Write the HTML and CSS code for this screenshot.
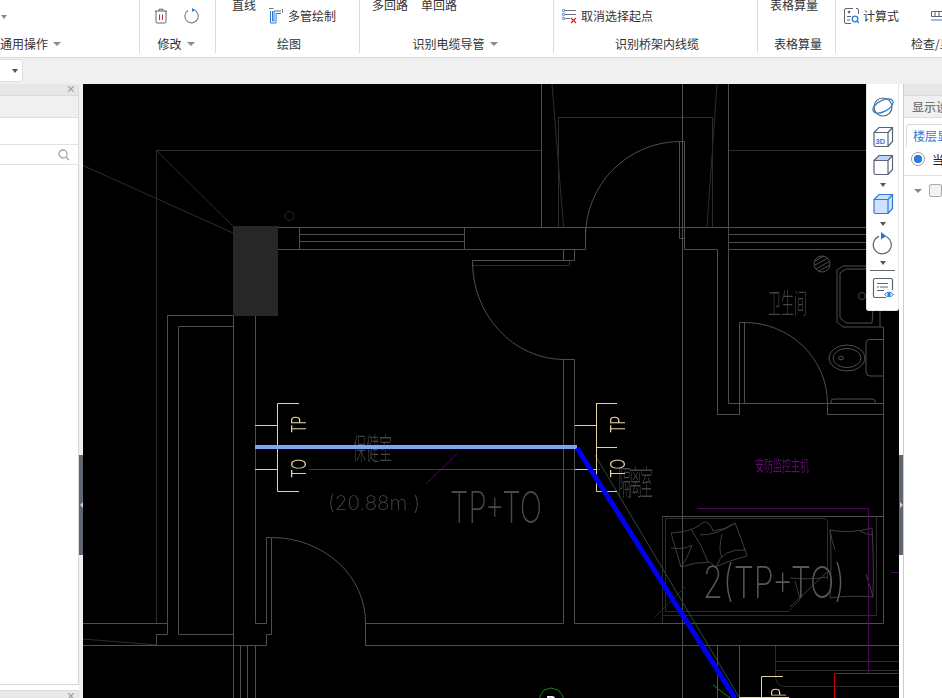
FILE: index.html
```html
<!DOCTYPE html>
<html lang="zh-CN">
<head>
<meta charset="utf-8">
<title>CAD</title>
<link rel="stylesheet" href="styles.css">
</head>
<body>
<div class="app">
  <header class="ribbon">
    <section class="group g1">
      <div class="tools"><span class="caret stray"></span></div>
      <div class="label label-left">通用操作<span class="caret"></span></div>
    </section>
    <section class="group g2">
      <div class="tools">
        <svg class="ico trash" viewBox="0 0 14 16" width="14" height="16"><path d="M1 3h12M5 3V1.200h4V3M2 3v10.800q0 1.200 1.200 1.200h7.600q1.200 0 1.200-1.200V3" fill="none" stroke="#5b6474"/><path d="M5.500 6.500v5.500M8.500 6.500v5.500" stroke="#e02020"/></svg>
        <svg class="ico redo" viewBox="0 0 16 16" width="16" height="16"><path d="M9.500 1.800A6.700 6.700 0 1 1 4 2.500" fill="none" stroke="#7a808a" stroke-width="1.100"/><path d="M8 0l3 2-3 2z" fill="#2e7bd6"/></svg>
      </div>
      <div class="label label-caret">修改<span class="caret"></span></div>
    </section>
    <section class="group g3">
      <div class="tools">
        <span class="cut">直线</span>
        <span class="tool multi">
          <svg class="ico" viewBox="0 0 15 16" width="15" height="16"><path d="M0 .5h4.500M13.500 1v4" stroke="#777" fill="none"/><path d="M1.500 3V15H7V5.500H12M3.500 3V13H5V3H12" stroke="#2e7bd6" fill="none"/></svg>
          多管绘制
        </span>
      </div>
      <div class="label">绘图</div>
    </section>
    <section class="group g4">
      <div class="tools"><span class="cut">多回路</span><span class="cut">单回路</span></div>
      <div class="label label-caret">识别电缆导管<span class="caret"></span></div>
    </section>
    <section class="group g5">
      <div class="tools">
        <span class="tool cancel">
          <svg class="ico" viewBox="0 0 15 15" width="15" height="15"><g fill="none" stroke="#2e7bd6"><circle cx="1.500" cy="1.500" r="1.200"/><circle cx="1.500" cy="5.500" r="1.200"/><circle cx="1.500" cy="9.500" r="1.200"/></g><path d="M3 1.500h11M3 5.500h11M3 9.500h5" stroke="#6b7280"/><path d="M9 9l5 5M14 9l-5 5" stroke="#e02020" stroke-width="1.200"/></svg>
          取消选择起点
        </span>
      </div>
      <div class="label">识别桥架内线缆</div>
    </section>
    <section class="group g6">
      <div class="tools"><span class="cut">表格算量</span></div>
      <div class="label">表格算量</div>
    </section>
    <section class="group g7">
      <div class="tools">
        <span class="tool calc">
          <svg class="ico" viewBox="0 0 15 16" width="15" height="16"><path d="M9 .5H2Q.5.500.5 2v12q0 1.500 1.500 1.500h5M12 .5h1q1.500 0 1.500 1.500v4" fill="none" stroke="#5b6474"/><circle cx="5" cy="4" r="1.300" fill="#5b6474"/><path d="M3 8.500h4M3 12h3" stroke="#5b6474"/><circle cx="11" cy="11" r="2.800" fill="none" stroke="#2e7bd6" stroke-width="1.300"/><path d="M13 13l2 2" stroke="#2e7bd6" stroke-width="1.300"/></svg>
          计算式
        </span>
        <svg class="ico check" viewBox="0 0 16 16" width="16" height="16"><path d="M.5 3.500h15v5H.5zM4 3.500v5M8 3.500v5M12 3.500v5" fill="none" stroke="#5b6474"/><path d="M0 12h12" stroke="#2e7bd6"/></svg>
      </div>
      <div class="label label-left">检查/显示</div>
    </section>
  </header>

  <div class="subbar"><div class="combo"><span class="caret dark"></span></div></div>

  <main class="workspace">
    <aside class="panel left">
      <div class="dock-head"><span class="close">×</span></div>
      <div class="dock-tabs"></div>
      <div class="dock-blank"></div>
      <div class="search">
        <svg viewBox="0 0 12 12" width="12" height="12"><circle cx="5" cy="5" r="4" fill="none" stroke="#a8a8a8" stroke-width="1.300"/><path d="M8 8l3 3" stroke="#a8a8a8" stroke-width="1.500"/></svg>
      </div>
      <div class="dock-body"></div>
      <div class="dock-head second"><span class="close">×</span></div>
    </aside>
    <div class="splitter"><span class="handle"><span class="arrow arrow-l"></span></span></div>

    <div class="canvas">
      <svg class="cad" viewBox="83 84 816 614" width="816" height="614">
        <g class="dim">
          <path d="M156.500 150.500H541.500M728 150.500H899M156.500 150.500V623.500M156.500 150.500L233 226M83 165.500L233 233"/>
          <path d="M558.500 227V117.500H712.500V227M552 84L563.500 227M717 84L707 227"/>
          <path d="M83 639L156.500 645"/>
          <circle cx="289.500" cy="216" r="4.500"/>
          <path d="M472.500 265.500H569.500V260.500"/>
          <path d="M662.500 516.500V623M665.500 611.500V518.500H824Q827.500 518.500 827.500 522V580M665.500 611.500H788L800 600M662.500 615.500H876.500V516"/>
          <path d="M775.500 645V675Q775.500 686.500 785 686.500H899M775.500 661.500H899M775.500 670.500H899"/>
        </g>
        <g class="sofa">
          <path d="M671 533Q690 532 700 525Q704 520 708 523Q712 526 713 531Q725 530 735 523Q742 540 747 556Q730 560 715 567L710 562Q695 562 681 567Q676 550 671 533Z"/>
          <path d="M691 529Q702 545 708 562M671 548Q684 550 692 545Q688 558 681 567M700 535Q718 535 735 523M722 534Q718 550 722 558M716 567Q722 548 746 550"/>
          <path d="M830 530Q850 534 872 528Q874 560 873 597Q850 595 830 598Q832 560 830 530ZM830 530Q832 542 835 550M860 531Q868 535 872 535"/>
          <path d="M790 578Q810 580 827 577M790 607L827 572M795 581Q798 590 800 600M866 574Q870 586 873 597"/>
        </g>
        <g class="wall">
          <path d="M541.500 84V227M682.500 84V698M728.500 84V403.500"/>
          <path d="M277 227.500H899M299 234.500H464M299 241.500H464M277 249.500H464.500M728 234.500H899M728 242.500H899M728 249.500H899"/>
          <path d="M299.500 227V249.500M464.500 227V249.500H585.500V227"/>
          <path d="M585.500 237A95 95 0 0 1 679.500 141.500H684.500V249.500H717.500V414.500H739.500V322.500H744.500V403.500M679.500 141.500V238.500H684.500"/>
          <path d="M744.500 322.500A83 81 0 0 1 827.500 403.500V414.500H883.500V327M728.500 403.500H883.500"/>
          <path d="M563.500 249.500V260.500M574.500 249.500V260.500H472.500V265.500"/>
          <path d="M472.500 260.500A92 98 0 0 0 563.500 359.500H574.500V623.500H883.500V400M563.500 359.500V623.500H365.500V645.500H899M365.500 645.500V623"/>
          <path d="M365.500 623A94 85 0 0 0 271.500 537.500H266.500V623.500H255.500V226M271.500 537.500V634.500H266.500M266.500 634.500V645.500H83"/>
          <path d="M167.500 315.500H233.500M167.500 315.500V634.500H156.500V645.500M83 623.500H167.500M178.500 326.500H233.500M178.500 326.500V634.500H233.500M233.500 226V698M240.500 645V698M247.500 645V698M255.500 645V698"/>
          <path d="M717.500 645.500V698M739.500 645.500V698M662 516.500H883.500"/>
          <circle cx="862" cy="296" r="3.500"/>
          <path d="M866 266H843L837 270V322L843 327H883M866 269H846L840 273V318L846 323H872L873 310M880 311V327"/>
          <ellipse cx="847" cy="358" rx="18" ry="13"/>
          <ellipse cx="847" cy="358" rx="14" ry="9.500"/>
          <ellipse cx="841" cy="358" rx="2.500" ry="1.800"/>
          <path d="M883 339.500H870Q866 339.500 866 343V372Q866 376 870 376H883M831 403V401Q831 399 834 399H872Q875 399 875 401V403"/>
          <circle cx="822" cy="264" r="8"/>
          <path d="M815 261L824 256M815 265L828 258M816 269L830 261M819 271L830 265"/>
        </g>
        <rect class="block" x="233" y="226" width="45" height="90"/>
        <g class="purple">
          <path d="M426 484L457 454M655 617L685 587M698 508.500H868.500V673M891 572.500H899"/>
        </g>
        <path class="teal" d="M309 469.500H600M595 455L739 697"/>
        <path class="red" d="M899 673.500H834.500V698"/>
        <path class="green" d="M713 685L730 698"/>
        <polygon class="green" points="551,688 558,690 563,696 563,706 540,706 540,696 544,690"/>
        <g class="glyphs">
          <text class="badge" x="551" y="706" text-anchor="middle">P</text>
          <text class="big" x="450" y="523" textLength="92" lengthAdjust="spacingAndGlyphs">TP+TO</text>
          <text class="big big2" x="703" y="598" textLength="142" lengthAdjust="spacingAndGlyphs">2(TP+TO)</text>
          <text class="len" x="328" y="510" textLength="92" lengthAdjust="spacingAndGlyphs">(20.88m )</text>
          <text class="room" transform="translate(353 459) scale(1 2.300)">保健室</text>
          <text class="room" transform="translate(618 495) scale(1 2.600)" textLength="35">隔离室</text>
          <text class="room" transform="translate(768 314) scale(1 2.200)">卫生间</text>
          <text class="note" transform="translate(755 471) scale(1 1.700)">安防监控主机</text>
          <text class="tag" transform="translate(306 433) rotate(-90)" textLength="17" lengthAdjust="spacingAndGlyphs">TP</text>
          <text class="tag" transform="translate(306 478) rotate(-90)" textLength="19" lengthAdjust="spacingAndGlyphs">TO</text>
          <text class="tag" transform="translate(625 433) rotate(-90)" textLength="17" lengthAdjust="spacingAndGlyphs">TP</text>
          <text class="tag" transform="translate(625 478) rotate(-90)" textLength="19" lengthAdjust="spacingAndGlyphs">TO</text>
          <text class="tag" transform="translate(786 697) rotate(-90)" textLength="9" lengthAdjust="spacingAndGlyphs">P</text>
        </g>
        <g class="yellow-line">
          <path d="M299 403.500H277.500V491.500H299M255 425.500H277M255 469.500H277M277 447.500H299"/>
          <path d="M596 403.500H617M596.500 403.500V491.500H617M575 425.500H596M575 469.500H596M596 447.500H617"/>
          <path d="M739 697.500H761.500V676.500H783M761 697.500H789"/>
        </g>
        <path class="pipe-light" d="M255 447H577"/>
        <path class="pipe" d="M577 448L735 698"/>
      </svg>
      <nav class="viewbar">
        <svg class="view orbit" viewBox="0 0 22 22" width="22" height="22"><circle cx="11" cy="11" r="9" fill="none" stroke="#5b6474" stroke-width="1.200"/><ellipse cx="11" cy="10" rx="11" ry="5.500" transform="rotate(-28 11 10)" fill="none" stroke="#2e7bd6" stroke-width="1.200"/></svg>
        <svg class="view" viewBox="0 0 22 22" width="22" height="22"><path d="M2 6.500h14v14H3.500Q2 20.500 2 19zM2 6.500l5-5h13.500v14l-4.500 5M16 6.500l4.500-5" fill="none" stroke="#5b6474" stroke-width="1.200"/><text class="three-d" x="3.500" y="17.500">3D</text></svg>
        <svg class="view" viewBox="0 0 22 22" width="22" height="22"><path d="M2 6.500l5-5h13.500l-4.500 5z" fill="#bcd7f7"/><path d="M2 6.500h14v14H3.500Q2 20.500 2 19zM2 6.500l5-5h13.500v14l-4.500 5M16 6.500l4.500-5" fill="none" stroke="#5b6474" stroke-width="1.200"/></svg>
        <span class="caret dark"></span>
        <svg class="view" viewBox="0 0 22 22" width="22" height="22"><path d="M2 6.500l5-5h13.500v14l-4.500 5H3.500Q2 20.500 2 19z" fill="#cfe2fa"/><path d="M2 6.500h14v14H3.500Q2 20.500 2 19zM2 6.500l5-5h13.500v14l-4.500 5M16 6.500l4.500-5" fill="none" stroke="#2e7bd6" stroke-width="1.200"/></svg>
        <span class="caret dark"></span>
        <svg class="view" viewBox="0 0 22 22" width="22" height="22"><path d="M13 4.200A9 9 0 1 1 7 4.400" fill="none" stroke="#5b6474" stroke-width="1.200"/><path d="M9 0l5 4-5 3.500z" fill="#1f74e0"/></svg>
        <span class="caret dark"></span>
        <span class="rule"></span>
        <svg class="view" viewBox="0 0 22 22" width="22" height="22"><path d="M14 20.500H3Q1.500 20.500 1.500 19V3Q1.500 1.500 3 1.500H19Q20.500 1.500 20.500 3V13" fill="none" stroke="#5b6474" stroke-width="1.200"/><path d="M5 6.500h11M8 10h8M5 10h2M5 13.500h7" stroke="#5b6474"/><path d="M12.500 17.500q4.500-4.500 9 0q-4.500 4.500-9 0z" fill="#fff" stroke="#2e7bd6"/><circle cx="17" cy="17.500" r="1.700" fill="#2e7bd6"/></svg>
      </nav>
    </div>

    <div class="splitter"><span class="handle"><span class="arrow arrow-r"></span></span></div>
    <aside class="panel right">
      <div class="dock-head"></div>
      <div class="dock-tabs title">显示设置</div>
      <div class="tabstrip"><span class="tab">楼层显示</span></div>
      <div class="radio-row"><span class="radio"></span><span class="radio-text">当前楼层</span></div>
      <div class="tree"><span class="caret"></span><span class="box"></span></div>
    </aside>
  </main>
</div>
</body>
</html>
```

FILE: styles.css
```css
* { box-sizing: border-box; }
html, body { margin: 0; height: 100%; overflow: hidden; }
body { font-family: "Noto Sans CJK SC", "Noto Sans", sans-serif; font-size: 12px; color: #333; background: #f0f0f0; }
.app { width: 942px; height: 698px; display: flex; flex-direction: column; overflow: hidden; }

/* ribbon */
.ribbon { flex: 0 0 58px; display: flex; background: #fff; border-bottom: 1px solid #d9d9d9; padding-bottom: 4px; overflow: hidden; }
.group { display: flex; flex-direction: column; border-right: 1px solid #dcdcdc; flex: none; height: 53px; }
.g1 { width: 140px; }
.g2 { width: 76px; }
.g3 { width: 144px; }
.g4 { width: 194px; }
.g5 { width: 204px; }
.g6 { width: 78px; }
.g7 { width: 200px; border-right: 0; }
.tools { flex: 0 0 35px; height: 35px; display: flex; align-items: flex-start; white-space: nowrap; line-height: 18px; }
.label { height: 18px; line-height: 18px; display: flex; align-items: center; justify-content: center; gap: 5px; padding-left: 3px; white-space: nowrap; }
.label-left { justify-content: flex-start; padding-left: 0; }
.label-caret { padding: 0 3px 0 0; }
.ico { flex: none; display: block; }
.cut { margin-top: -4px; }
.tool { display: flex; align-items: center; gap: 4px; margin-top: 7px; height: 18px; }

.caret { flex: none; width: 0; height: 0; border-left: 4px solid transparent; border-right: 4px solid transparent; border-top: 4px solid #8a8a8a; }
.caret.dark { border-left-width: 3.500px; border-right-width: 3.500px; border-top-color: #555; }
.stray { margin: 15px 0 0 1px; border-left-width: 3px; border-right-width: 3px; }

.g2 .tools { gap: 16px; padding-left: 14px; padding-top: 8px; }
.g3 .tools { padding-left: 16px; }
.multi { margin-left: 13px; }
.g4 .tools { padding-left: 12px; gap: 13px; }
.g5 .tools { padding-left: 8px; }
.g6 .tools { padding-left: 12px; }
.g7 .tools { padding-left: 8px; }
.g7 .label { padding-left: 75px; }
.check { margin: 8px 0 0 32px; }

/* second bar */
.subbar { flex: 0 0 26px; background: #f0f0f0; padding-top: 1px; }
.combo { width: 23px; height: 23px; background: #fff; border: 1px solid #dedede; border-left: 0; border-radius: 0 3px 3px 0; display: flex; align-items: center; justify-content: flex-end; padding-right: 4px; }

/* workspace */
.workspace { flex: 1; display: flex; min-height: 0; background: #f0f0f0; }
.panel { flex: none; display: flex; flex-direction: column; background: #fff; overflow: hidden; }
.left { width: 79px; }
.right { width: 39px; background: #fff; border-left: 1px solid #c9cdd1; }
.dock-head { flex: 0 0 12px; background: #e6e6e6; border-bottom: 1px solid #dadada; display: flex; justify-content: flex-end; align-items: center; padding-right: 3px; }
.close { color: #9a9a9a; font: 14px/11px "Liberation Sans", sans-serif; }
.dock-tabs { flex: 0 0 22px; background: #f0f0f0; border-bottom: 1px solid #dcdcdc; border-right: 1px solid #dcdcdc; }
.dock-blank { flex: 0 0 27px; border-right: 1px solid #dcdcdc; border-bottom: 1px solid #e2e2e2; }
.search { flex: 0 0 20px; display: flex; align-items: center; justify-content: flex-end; padding-right: 8px; border-right: 1px solid #dcdcdc; border-bottom: 1px solid #e2e2e2; }
.dock-body { flex: 0 0 520px; border-right: 1px solid #d6d6d6; border-bottom: 1px solid #d6d6d6; }
.second { margin-top: 5px; background: #e8e8e8; border-top: 1px solid #dadada; }
.left .dock-head { border-right: 1px solid #dcdcdc; }

.splitter { flex: 0 0 4px; position: relative; background: #fff; }
.left + .splitter { background: #f0f0f0; }
.handle { position: absolute; left: 0; top: 371px; width: 4px; height: 100px; background: #5f6670; display: flex; align-items: center; justify-content: center; }
.arrow { width: 0; height: 0; border-top: 3px solid transparent; border-bottom: 3px solid transparent; }
.arrow-l { border-right: 3px solid #c9ced4; }
.arrow-r { border-left: 3px solid #c9ced4; }

.canvas { flex: 0 0 816px; position: relative; background: #000; overflow: hidden; }
.cad { display: block; }
.cad path, .cad circle, .cad ellipse, .cad polygon { fill: none; }
.block { fill: #272727; }
.wall path, .wall circle, .wall ellipse { stroke: #4e4e4e; stroke-width: 1; }
.dim path, .dim circle { stroke: #2c2c2c; stroke-width: 1; }
.sofa path { stroke: #3e3e3e; stroke-width: 1; }
.purple path { stroke: #4a0a55; stroke-width: 1; }
.cad .teal { stroke: #2a4a3c; stroke-width: 1; }
.cad .red { stroke: #d00000; stroke-width: 1; }
.cad .green { stroke: #0a8a0a; stroke-width: 1; }
.yellow-line path { stroke: #e3d3a0; stroke-width: 1; }
.cad .pipe { stroke: #0000f0; stroke-width: 5; }
.cad .pipe-light { stroke: #7ea6ee; stroke-width: 4; }
.glyphs { opacity: .99; }
.tag { font: 300 20px "Inter", "Liberation Sans", sans-serif; fill: #e3d3a0; }
.badge { font: 700 14px "Liberation Sans", sans-serif; fill: #fff; }
.big { font: 200 44px "Inter", "Liberation Sans", sans-serif; fill: #4a4a4a; }
.big2 { fill: #5a5a5a; }
.len { font: 200 20px "Inter", "Liberation Sans", sans-serif; fill: #4a4a4a; }
.room { font: 200 13px "Noto Sans CJK SC", sans-serif; fill: #454545; }
.note { font: 400 9px "Noto Sans CJK SC", sans-serif; fill: #5a1068; }

.viewbar { position: absolute; right: 0; top: 0; width: 33px; height: 227px; background: #fff; border: 1px solid #e6e6e6; border-top: 0; border-radius: 0 0 3px 3px; display: flex; flex-direction: column; align-items: center; gap: 6px; padding-top: 12px; }
.viewbar .caret { margin-top: 1px; }
.view { flex: none; display: block; overflow: visible; }
.orbit { margin-bottom: 2px; }
.three-d { font: 700 7.500px "Liberation Sans", sans-serif; fill: #2e7bd6; }
.rule { flex: none; width: 25px; height: 1px; background: #666; margin-top: -1px; }

/* right panel */
.title { padding: 0 0 0 8px; color: #777; font-weight: 500; line-height: 22px; white-space: nowrap; border-right: 0; overflow: hidden; }
.tabstrip { flex: 0 0 29px; padding: 6px 0 0 2px; overflow: hidden; }
.tab { display: block; width: 60px; height: 23px; padding-left: 6px; color: #2e7bd6; line-height: 22px; white-space: nowrap; background: #fff; border: 1px solid #dcdcdc; border-bottom: 0; border-radius: 3px 3px 0 0; }
.radio-row { flex: 0 0 29px; display: flex; align-items: center; gap: 7px; padding: 0 0 4px 7px; border-bottom: 1px solid #e0e0e0; white-space: nowrap; overflow: hidden; }
.radio { flex: none; width: 14px; height: 14px; border-radius: 50%; border: 1px solid #9aa0a8; background: radial-gradient(circle, #2e7bd6 0 4px, #fff 4.500px); }
.radio-text { color: #222; }
.tree { display: flex; align-items: center; gap: 7px; padding: 8px 0 0 10px; overflow: hidden; }
.box { flex: none; width: 13px; height: 13px; border: 1px solid #aaa; background: #f2f2f2; border-radius: 2px; }
```
